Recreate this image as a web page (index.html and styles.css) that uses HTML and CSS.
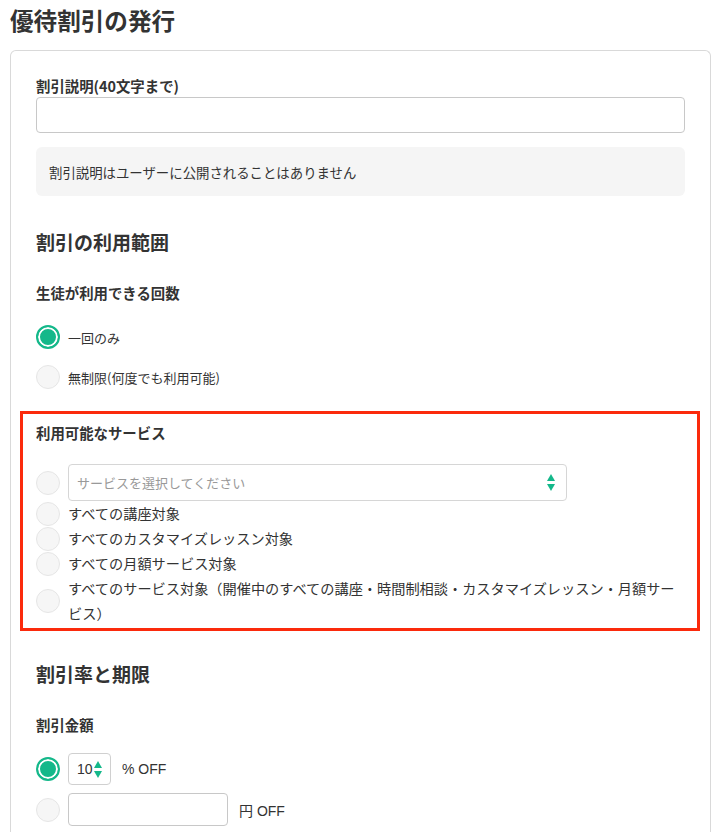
FILE: index.html
```html
<!DOCTYPE html>
<html lang="ja">
    <head>
        <meta charset="UTF-8" />
        <meta name="viewport" content="width=device-width, initial-scale=1.0" />
        <title>優待割引の発行</title>
        <link rel="stylesheet" href="styles.css">
    </head>
    <body>
        <h1 class="page-title">優待割引の発行</h1>
        <div class="card">
            <div class="field-label">割引説明(40文字まで)</div>
            <input class="text-input" type="text" />
            <div class="note">割引説明はユーザーに公開されることはありません</div>

            <h2 class="section-title scope-title">割引の利用範囲</h2>
            <div class="field-label count-label">生徒が利用できる回数</div>
            <div class="radio-list">
                <label class="radio-row">
                    <input class="radio" type="radio" name="count" checked />
                    <span>一回のみ</span>
                </label>
                <label class="radio-row">
                    <input class="radio" type="radio" name="count" />
                    <span>無制限(何度でも利用可能)</span>
                </label>
            </div>

            <div class="highlight">
                <div class="field-label">利用可能なサービス</div>
                <div class="service-list">
                    <label class="service-row select-row">
                        <input class="radio" type="radio" name="service" />
                        <div class="select">
                            <span class="placeholder">サービスを選択してください</span>
                            <svg class="arrows" width="8" height="17" viewBox="0 0 8 17">
                                <path d="M4 0 L8 7 L0 7 Z" fill="#14b88a" />
                                <path d="M0 10 L8 10 L4 17 Z" fill="#14b88a" />
                            </svg>
                        </div>
                    </label>
                    <label class="service-row">
                        <input class="radio" type="radio" name="service" />
                        <span>すべての講座対象</span>
                    </label>
                    <label class="service-row">
                        <input class="radio" type="radio" name="service" />
                        <span>すべてのカスタマイズレッスン対象</span>
                    </label>
                    <label class="service-row">
                        <input class="radio" type="radio" name="service" />
                        <span>すべての月額サービス対象</span>
                    </label>
                    <label class="service-row">
                        <input class="radio" type="radio" name="service" />
                        <span>すべてのサービス対象（開催中のすべての講座・時間制相談・カスタマイズレッスン・月額サービス）</span>
                    </label>
                </div>
            </div>

            <h2 class="section-title rate-title">割引率と期限</h2>
            <div class="field-label amount-label">割引金額</div>
            <div class="amount-list">
                <label class="radio-row">
                    <input class="radio" type="radio" name="amount" checked />
                    <div class="number">
                        <span>10</span>
                        <svg width="8" height="17" viewBox="0 0 8 17">
                            <path d="M4 0 L8 7 L0 7 Z" fill="#14b88a" />
                            <path d="M0 10 L8 10 L4 17 Z" fill="#14b88a" />
                        </svg>
                    </div>
                    <span class="unit">% OFF</span>
                </label>
                <label class="radio-row">
                    <input class="radio" type="radio" name="amount" />
                    <input class="yen-input" type="text" />
                    <span class="unit">円 OFF</span>
                </label>
            </div>
        </div>
    </body>
</html>
```
FILE: styles.css
```css
* {
    box-sizing: border-box;
}
body {
    margin: 0;
    padding: 0 5px 0 10px;
    background-color: white;
    color: #333;
    font-family: "Noto Sans CJK JP", "Noto Sans", sans-serif;
    font-size: 13px;
}
.page-title {
    margin: 0;
    padding-top: 4px;
    height: 50px;
    font-size: 23.6px;
    line-height: 32px;
    font-weight: bold;
    color: #333;
}
.card {
    width: 701px;
    border: 1px solid #d9d9d9;
    border-bottom: none;
    border-radius: 6px 6px 0 0;
    padding: 25px 25px 0 25px;
    min-height: 790px;
}
.field-label {
    font-size: 14.4px;
    line-height: 20px;
    font-weight: bold;
    color: #333;
}
.text-input {
    display: block;
    width: 100%;
    height: 36px;
    margin-top: 1px;
    border: 1px solid #c8c8c8;
    border-radius: 4px;
    font: inherit;
    padding: 0 10px;
}
.note {
    margin-top: 14px;
    height: 49px;
    background-color: #f5f5f5;
    border-radius: 6px;
    padding: 0 13px;
    display: flex;
    align-items: center;
    font-size: 13.4px;
    color: #333;
}
.section-title {
    margin: 0;
    font-size: 19px;
    line-height: 26px;
    font-weight: bold;
    color: #333;
}
.scope-title {
    margin-top: 33px;
}
.count-label {
    margin-top: 28px;
}
.radio-list {
    margin-top: 22px;
    display: flex;
    flex-direction: column;
    gap: 16px;
}
.radio-row {
    display: flex;
    align-items: center;
    gap: 8px;
}
.radio {
    appearance: none;
    -webkit-appearance: none;
    flex: none;
    margin: 0;
    width: 24px;
    height: 24px;
    border-radius: 50%;
    border: 1px solid #e6e6e6;
    background-color: #f6f6f6;
}
.radio:checked {
    border: 2px solid #14b88a;
    background-color: #14b88a;
    box-shadow: inset 0 0 0 2px white;
}
.highlight {
    margin: 22px -15px 0 -16px;
    border: 3px solid #fb2a0c;
    padding: 9px 12px 2px 13px;
}
.service-list {
    margin-top: 21px;
    display: flex;
    flex-direction: column;
}
.service-row {
    display: flex;
    align-items: center;
    gap: 8px;
    font-size: 14.2px;
    line-height: 25px;
}
.select {
    flex: 1;
    max-width: 499px;
    height: 37px;
    border: 1px solid #d6d6d6;
    border-radius: 4px;
    display: flex;
    align-items: center;
    justify-content: space-between;
    padding: 0 11px 0 8px;
    font-size: 13px;
}
.placeholder {
    color: #999;
}
.rate-title {
    margin-top: 30px;
}
.amount-label {
    margin-top: 28px;
}
.amount-list {
    margin-top: 18px;
    display: flex;
    flex-direction: column;
    gap: 8px;
}
.number {
    width: 43px;
    height: 32px;
    border: 1px solid #d0d0d0;
    border-radius: 4px;
    display: flex;
    align-items: center;
    justify-content: space-between;
    padding: 0 8px 0 8px;
    font-family: "Liberation Sans", sans-serif;
    font-size: 14px;
}
.yen-input {
    width: 160px;
    height: 33px;
    border: 1px solid #c8c8c8;
    border-radius: 4px;
    margin: 0;
}
.unit {
    margin-left: 3px;
    font-family: "Liberation Sans", "Noto Sans CJK JP", sans-serif;
    font-size: 14px;
    color: #333;
}
```
